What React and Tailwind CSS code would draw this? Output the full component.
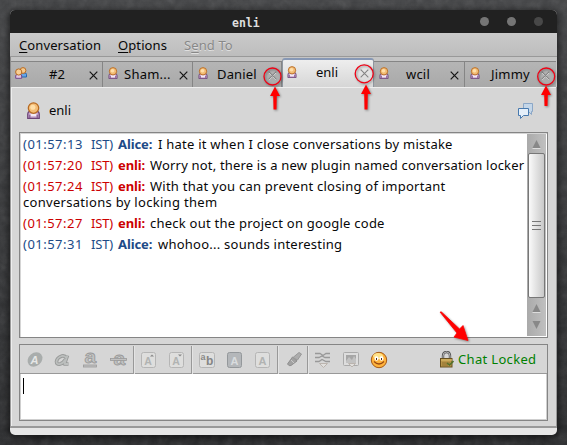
import React from "react";

const Person = ({ size = 16, className = "" }) => (
  <svg width={size} height={size} viewBox="0 0 16 16" className={className}>
    <path d="M2.6 15.5V11.5Q2.6 8.5 5.5 8.5H10.5Q13.4 8.5 13.4 11.5V15.5Z" fill="#c9a8cf" stroke="#6b4377" strokeWidth="1.2" />
    <path d="M5 11h6l-.5 2.5h-5z" fill="#f3eaf5" />
    <path d="M4.5 12v3M11.5 12v3" stroke="#7d5588" />
    <circle cx="8" cy="5.7" r="4.9" fill="#f3bd77" stroke="#b66a22" strokeWidth="1.2" />
    <circle cx="7.4" cy="5" r="2.4" fill="#ffdfa9" />
  </svg>
);

const People = () => (
  <svg width="12" height="12" viewBox="0 0 12 12">
    <path d="M5.500 10V7.500q0-1.500 1.500-1.500h3q1.500 0 1.500 1.500v2.500z" fill="#65a5e6" stroke="#2467b0" />
    <circle cx="8" cy="3.500" r="2.900" fill="#f5ca8e" stroke="#b86b22" />
    <path d="M.7 11.3V9q0-1.500 1.500-1.500h3Q6.700 7.500 6.700 9v2.300z" fill="#dfc7e3" stroke="#75468a" />
    <circle cx="3.700" cy="5" r="3.100" fill="#f8ce94" stroke="#b66a22" />
  </svg>
);

const Cross = ({ locked }) => (
  <svg width="9" height="9" viewBox="0 0 9 9" fill="none">
    {locked && <path d="M1 2l7 7M8 2L1 9" stroke="#eee" />}
    <path d="M.7 .7l7.600 7.600M8.300 .7L.7 8.300" stroke={locked ? "#858585" : "#151515"} strokeWidth="1.200" />
  </svg>
);

const Tab = ({ name, width, label, close, group, locked, last }) => (
  <div className={`relative h-[26px] shrink-0 border-t border-[#858585] bg-linear-to-b from-[#b5b5b5] to-[#a9a9a9] ${last ? "" : "border-r"} ${width}`}>
    <span className="absolute left-[4px] top-[5px]">{group ? <People /> : <Person size={12} />}</span>
    <span className={`absolute top-[3px] whitespace-nowrap text-[13px] leading-[18px] ${label}`}>{name}</span>
    <span className={`absolute top-[9px] leading-none ${close}`}><Cross locked={locked} /></span>
  </div>
);

const messages = [
  { t: "(01:57:13", who: "Alice:", body: "I hate it when I close conversations by mistake" },
  { t: "(01:57:20", who: "enli:", body: "Worry not, there is a new plugin named conversation locker" },
  { t: "(01:57:24", who: "enli:", body: "With that you can prevent closing of important", more: "conversations by locking them" },
  { t: "(01:57:27", who: "enli:", body: "check out the project on google code" },
  { t: "(01:57:31", who: "Alice:", body: "whohoo... sounds interesting" },
];

const Message = ({ t, who, body, more }) => {
  const alice = who === "Alice:";
  return (
    <div className="mb-[5px] whitespace-nowrap leading-[16px]">
      <div className="flex">
        <span className={`flex ${alice ? "text-[#204a87]" : "text-[#cc0000]"}`}>
          <span className="w-[68px] tracking-[0.480px]">{t}</span>
          <span className="w-[27px] tracking-[-0.200px]">IST)</span>
          <b className={`tracking-[-0.100px] ${alice ? "w-[40px]" : "w-[32px]"}`}>{who}</b>
        </span>
        <span className={body.length > 50 ? "tracking-[0.180px]" : "tracking-[0.240px]"}>{body}</span>
      </div>
      {more && <div className="tracking-[0.300px]">{more}</div>}
    </div>
  );
};

const Glyph = ({ children, w = 18 }) => (
  <svg width={w} height="18" viewBox={`0 0 ${w} 18`} fill="none" className="shrink-0 overflow-visible">{children}</svg>
);
const Sep = () => <div className="h-[28px] w-[2px] shrink-0 border-l border-[#999] bg-[#e4e4e4]" />;

const BoxA = ({ mark, dark }) => (
  <Glyph>
    <rect x="1.500" y="1.500" width="14" height="15" rx="2" fill={dark ? "#b4b7ba" : "#dededd"} stroke={dark ? "#94989b" : "#b5b5b5"} />
    <text x={mark ? 8 : 8.5} y="13.500" textAnchor="middle" fontSize={mark ? 10.5 : 11} fontWeight="bold" fill={dark ? "#d9dcde" : "#b1b3b2"}>A</text>
    {mark === "up" && <path d="M10 5.500l2-2 2 2z" fill="#888" />}
    {mark === "down" && <path d="M10 3.500h4l-2 2z" fill="#888" />}
  </Glyph>
);

const Toolbar = () => (
  <div className="flex h-[29px] items-center border-b border-[#999] bg-[#d6d6d6] pt-px font-['Liberation_Sans']">
    <div className="flex w-[113px] shrink-0 items-center gap-[10px] pl-[6px]">
      <Glyph>
        <ellipse cx="9" cy="8.500" rx="8" ry="6.500" transform="rotate(-40 9 8.500)" fill="#a9adac" />
        <text x="4.500" y="12.500" fontSize="11" fontWeight="bold" fontStyle="italic" fill="#e6e7e6">A</text>
      </Glyph>
      <Glyph>
        <path d="M13.500 4.500L10.500 13h4M12.500 7Q11 4.500 8 5Q3 6.500 2.500 10.500Q2.500 13.500 5.500 13.200Q9 12.500 11.500 8.500" stroke="#999b9a" strokeWidth="3.600" strokeLinejoin="round" />
        <path d="M13.500 4.500L10.500 13h4M12.500 7Q11 4.500 8 5Q3 6.500 2.500 10.500Q2.500 13.500 5.500 13.200Q9 12.500 11.500 8.500" stroke="#bbbebd" strokeWidth="1.800" strokeLinejoin="round" />
      </Glyph>
      <Glyph><text transform="translate(2.500 12) scale(1.100 1)" fontSize="19" fontWeight="bold" fill="#c1c3c2" stroke="#999" strokeWidth=".8">a</text><rect x="1.500" y="14" width="13" height="2" fill="#c1c1c1" stroke="#999" strokeWidth=".8" /></Glyph>
      <Glyph><text transform="translate(3.500 14) scale(1.100 1)" fontSize="19" fontWeight="bold" fill="#c1c3c2" stroke="#999" strokeWidth=".8">a</text><rect x=".5" y="7.500" width="16" height="2" fill="#c1c1c1" stroke="#999" strokeWidth=".8" /></Glyph>
    </div>
    <Sep />
    <div className="flex w-[56px] shrink-0 items-center gap-[10px] pl-[5px]"><BoxA mark="up" /><BoxA mark="down" /></div>
    <Sep />
    <div className="flex w-[84px] shrink-0 items-center gap-[10px] pl-[5px]">
      <Glyph><rect x="1.500" y="1.500" width="15" height="15" rx="2" fill="#dededd" stroke="#b5b5b5" /><text x="2.500" y="9" fontSize="9" fontWeight="bold" fill="#888">a</text><text x="8" y="14" fontSize="12" fontWeight="bold" fill="#858585">b</text></Glyph>
      <BoxA dark />
      <BoxA />
    </div>
    <Sep />
    <div className="w-[28px] shrink-0 pl-[6px]">
      <Glyph><path d="M2.500 13l5-7 4.500 4-6 4.500q-2 1-3.500-1.500z" fill="#a2a2a2" stroke="#8f8f8f" /><path d="M8 6.500l6-5 2.500 1.500-4 6z" fill="#adadad" stroke="#999" /><path d="M6 9l3 3" stroke="#c9c9c9" /></Glyph>
    </div>
    <Sep />
    <div className="flex flex-1 items-center gap-[10px] pl-[5px]">
      <Glyph><path d="M1 2.500h5l3 2 3-2h4M1 6.500h4l3-1.500 3 1.500h5M1 10.500h4l3-2 4 2h4" stroke="#999" strokeWidth="1.300" /><path d="M5.500 12.500h8l-4 4z" fill="#e0dfdd" stroke="#bbb4ae" /></Glyph>
      <Glyph><rect x="1.500" y="1.500" width="15" height="13" rx="1" fill="#ddd" stroke="#aaa" /><path d="M4 4h10v8H4z" fill="#a6a6a6" /><path d="M4 10l3-4 3 3 2-4 2 3v4H4z" fill="#c2c2c2" /><path d="M6.500 12.500h7l-3.500 3.500z" fill="#e0dfdd" stroke="#bbb4ae" /></Glyph>
      <Glyph><circle cx="9" cy="9" r="7.700" fill="#ffb43d" stroke="#a65a16" /><ellipse cx="8" cy="5" rx="5" ry="3" fill="#ffe28a" /><ellipse cx="6.500" cy="7.500" rx="2" ry="2.200" fill="#fff" /><ellipse cx="11.500" cy="7.500" rx="2" ry="2.200" fill="#fff" /><path d="M6.500 7v2M11.500 7v2" stroke="#553018" /><path d="M4 10.500q5 5 10 0" stroke="#9a4911" strokeWidth="1.200" /></Glyph>
    </div>
    <div className="flex w-[107px] shrink-0 items-center gap-[4px] text-[#008000]">
      <svg width="14" height="17" viewBox="0 0 14 17" fill="none">
        <path d="M3 8V5q0-4 3.500-4T10 5v3" stroke="#555" strokeWidth="2.400" /><path d="M3 8V5q0-4 3.500-4T10 5v3" stroke="#ccc" strokeWidth=".8" />
        <rect x=".5" y="7.500" width="11.500" height="8.500" fill="#b89548" stroke="#675020" /><path d="M1 9h11" stroke="#ddc071" /><path d="M2 12h8M2 14h6" stroke="#8e7030" />
        <path d="M7 12l2.500 2 4-4" stroke="#55722c" strokeWidth="1.600" />
      </svg>
      <span className="whitespace-nowrap pt-px font-['Noto_Sans',sans-serif] text-[13px] tracking-[0.330px]">Chat Locked</span>
    </div>
  </div>
);

const UpArrow = ({ x, y, h }) => (
  <path d={`M${x} ${y}l5 9.500h-3.200l-.3 ${h - 9.5}h-3l-.3-${h - 9.5}h-3.200z`} fill="#f00" />
);

const Annotations = () => (
  <svg width="567" height="445" className="pointer-events-none absolute left-0 top-0" fill="none">
    <g style={{ filter: "drop-shadow(1px 1px 1px rgba(0,0,0,.4))" }}>
      <circle cx="272.500" cy="76.500" r="8.500" stroke="#f00014" strokeWidth="1.300" />
      <circle cx="364.200" cy="73.800" r="9" stroke="#f00014" strokeWidth="1.300" />
      <circle cx="546.200" cy="76.500" r="8.500" stroke="#f00014" strokeWidth="1.300" />
      <UpArrow x={275} y={86.5} h={23} />
      <UpArrow x={366} y={84.5} h={25} />
      <UpArrow x={546} y={85.5} h={20.5} />
      <path d="M440 312l1.500 0L459.500 329l3.500-3.500 5 15-14-3.500 3-4z" fill="#f00" stroke="#f00" strokeWidth=".8" />
    </g>
  </svg>
);

export default function App() {
  return (
    <div className="relative h-[445px] w-[567px] overflow-hidden bg-linear-to-b from-[#414244] to-[#292a2c] font-['Noto_Sans',sans-serif] text-[13px] text-[#080808]">
      <svg width="567" height="445" className="absolute left-0 top-0 opacity-15">
        <filter id="stone"><feTurbulence type="fractalNoise" baseFrequency=".12" numOctaves="4" seed="4" /><feColorMatrix type="saturate" values="0" /></filter>
        <rect width="567" height="445" filter="url(#stone)" />
      </svg>
      <div className="relative pl-[10px] pt-[10px]">
        <div className="flex h-[425px] w-[547px] flex-col overflow-hidden rounded-[5px] bg-[#e6e6e6] shadow-[0_2px_6px_2px_rgba(0,0,0,.5)]">
          <header className="flex h-[23px] shrink-0 items-center bg-[#212121]">
            <span className="w-[458px] pl-[222px] pt-[4px] font-['DejaVu_Sans_Mono',monospace] text-[11.500px] font-bold leading-none text-[#dedede]">enli</span>
            <span className="mt-[-1px] flex gap-[18px] pl-[12px]">
              <i className="size-[9px] rounded-full bg-[#757575]" />
              <i className="size-[9px] rounded-full bg-[#757575]" />
              <i className="size-[9px] rounded-full bg-[#484848]" />
            </span>
          </header>
          <nav className="flex h-[24px] shrink-0 items-center border-b border-[#999] bg-linear-to-b from-[#cacaca] to-[#bdbdbd] pl-[9px] pt-[2px] tracking-[0.100px]">
            <span className="w-[99px]"><u className="underline-offset-2">C</u>onversation</span>
            <span className="w-[66px]"><u className="underline-offset-2">O</u>ptions</span>
            <span className="text-[#888] [text-shadow:0_1px_#e0e0e0]">S<u className="underline-offset-2">e</u>nd To</span>
          </nav>
          <section className="flex h-[30px] shrink-0 items-end border-l border-[#8c8c8c] bg-[#c5c5c5]">
            <Tab name="#2" group width="w-[92px]" label="left-[38px]" close="left-[78px]" />
            <Tab name="Sham..." width="w-[90px]" label="left-[21px] tracking-[0.250px]" close="left-[76px]" />
            <Tab name="Daniel" width="w-[89px]" label="left-[24px] tracking-[0.150px]" close="left-[75px]" locked />
            <div className="relative h-[29px] w-[92px] shrink-0 rounded-t-[3px] border-x border-t-2 border-x-[#8f969f] border-t-[#8798b5] bg-linear-to-b from-[#eee] to-[#d6d6d6]">
              <span className="absolute left-[3px] top-[6px]"><Person size={12} /></span>
              <span className="absolute left-[33px] top-[3px] leading-[18px]">enli</span>
              <span className="absolute left-[77px] top-[9px] leading-none"><Cross locked /></span>
            </div>
            <Tab name="wcil" width="w-[91px]" label="left-[32px] tracking-[0.200px]" close="left-[76px]" />
            <Tab name="Jimmy" width="w-[91px]" label="left-[26px] tracking-[0.200px]" close="left-[76px]" locked last />
          </section>
          <main className="flex h-[341px] shrink-0 flex-col border-x border-b-2 border-[#999] bg-[#d6d6d6] px-[8px] shadow-[inset_1px_1px_#eee]">
            <div className="flex h-[45px] shrink-0 items-center pl-[6px] pr-[14px] pt-[1px]">
              <Person size={17} />
              <span className="ml-[7px] flex-1 pt-[2px]">enli</span>
              <svg width="17" height="17" viewBox="0 0 17 17" fill="none"><path d="M6.500 1.500h9v8h-1v3l-3-3h-5z" fill="#c4d6e8" stroke="#8ba7c7" /><path d="M1.500 6.500h10v7h-5l-3 3v-3h-2z" fill="#e5eff9" stroke="#4779ae" /></svg>
            </div>
            <div className="flex h-[206px] shrink-0 border border-[#858585] bg-white shadow-[inset_1px_1px_#d5d5d5]">
              <div className="flex-1 pl-[3px] pt-[3px]">{messages.map((m) => <Message key={m.t} {...m} />)}</div>
              <div className="my-[1px] mr-[1px] flex w-[19px] flex-col bg-linear-to-r from-[#aaa] to-[#c0c0c0]">
                <svg width="19" height="19" viewBox="0 0 19 19"><path d="M5.500 14l4-8 4 8z" fill="#888" /><path d="M5.500 14.500h8" stroke="#ddd" /></svg>
                <div className="ml-[1px] flex h-[145px] w-[17px] flex-col items-center justify-center gap-[3px] rounded-[2px] border border-[#777] bg-linear-to-r from-[#fafafa] to-[#c9c9c9]">
                  <i className="h-px w-[9px] bg-[#777]" /><i className="h-px w-[9px] bg-[#777]" /><i className="h-px w-[9px] bg-[#777]" />
                </div>
                <svg width="19" height="38" viewBox="0 0 19 38"><path d="M5.500 14l4-8 4 8zM5.500 23l4 8 4-8z" fill="#888" /><path d="M5.500 14.500h8" stroke="#ddd" /></svg>
              </div>
            </div>
            <div className="mt-[6px] h-[77px] shrink-0 border border-[#858585] bg-white shadow-[inset_0_0_0_1px_#cfcfcf]">
              <Toolbar />
              <div className="ml-[3px] mt-[4px] h-[16px] w-px bg-black" />
            </div>
          </main>
        </div>
      </div>
      <Annotations />
    </div>
  );
}
